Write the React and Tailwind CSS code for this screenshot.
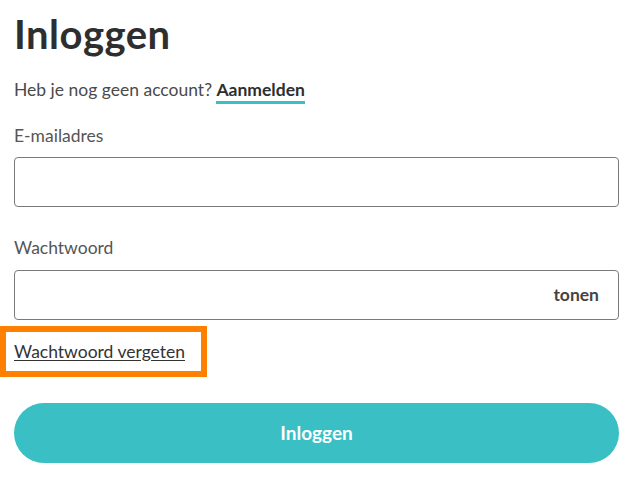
import React, { useState } from 'react';

const font = { fontFamily: 'Lato, "Open Sans", sans-serif' };

export default function App() {
  const [show, setShow] = useState(false);

  return (
    <div style={font} className="min-h-screen bg-white pl-[14px] pr-[19px] text-[#333]">
      <h1 className="pt-[12px] text-[40px] font-bold leading-[44px] tracking-[0.5px] text-[#2e2e2e]">Inloggen</h1>

      <p className="mt-[22px] text-[17.5px] leading-[24px] text-[#4a4a4a]">
        Heb je nog geen account?{' '}
        <a href="#" className="border-b-[3px] border-[#3abfc4] pb-[1px] font-bold text-[#2e2e2e]">
          Aanmelden
        </a>
      </p>

      <label className="mt-[22px] block text-[17.5px] leading-[24px] text-[#555]">E-mailadres</label>
      <input
        type="email"
        className="mt-[9px] block h-[50px] w-full rounded-[4px] border border-[#7a7a7a] px-3 outline-none"
      />

      <label className="mt-[29px] block text-[17.5px] leading-[24px] text-[#555]">Wachtwoord</label>
      <div className="relative mt-[10px]">
        <input
          type={show ? 'text' : 'password'}
          className="block h-[50px] w-full rounded-[4px] border border-[#7a7a7a] px-3 pr-24 outline-none"
        />
        <button
          type="button"
          onClick={() => setShow(!show)}
          className="absolute right-[20px] top-1/2 -translate-y-1/2 text-[17.5px] font-bold text-[#444]"
        >
          tonen
        </button>
      </div>

      <div className="-ml-[14px] mt-[6px] w-fit border-[6px] border-[#ff8000] py-[7px] pl-[8px] pr-[16px]">
        <a href="#" className="text-[17.5px] leading-[25px] text-[#333] underline underline-offset-2">
          Wachtwoord vergeten
        </a>
      </div>

      <button
        type="button"
        className="mt-[26px] flex h-[60px] w-full items-center justify-center rounded-full bg-[#3abfc4] text-[19px] font-bold text-white"
      >
        Inloggen
      </button>
    </div>
  );
}
